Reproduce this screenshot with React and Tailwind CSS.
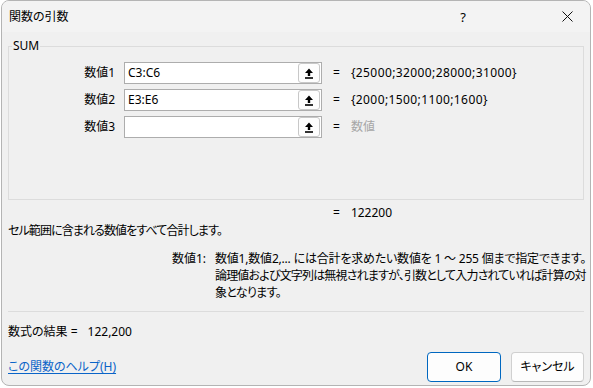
import React from "react";

const FONT = "[font-family:'Noto_Sans','Noto_Sans_CJK_JP',sans-serif] [font-feature-settings:'palt']";

const RefIcon = () => (
  <svg width="10" height="11" viewBox="0 0 10 11">
    <path d="M5 0.5 L9 5 L6.2 5 L6.2 8 L3.8 8 L3.8 5 L1 5 Z" fill="#000" />
    <rect x="1" y="9.2" width="8" height="1.6" fill="#000" />
  </svg>
);

const args = [
  { label: "数値1", ref: "C3:C6", value: "{25000;32000;28000;31000}" },
  { label: "数値2", ref: "E3:E6", value: "{2000;1500;1100;1600}" },
  { label: "数値3", ref: "", value: null },
];

const ArgRow = ({ label, refText, value }) => (
  <div className="flex items-center h-[22px]">
    <div className="w-[106px] text-right text-black">{label}</div>
    <div className="ml-[9px] w-[198px] h-[22px] flex items-center bg-white border border-[#adadad]">
      <span className="flex-1 pl-[3px] text-black">{refText}</span>
      <button className="w-[22px] h-[20px] mr-px flex items-center justify-center bg-[#fdfdfd] border border-[#c8c8c8] rounded-[3px]">
        <RefIcon />
      </button>
    </div>
    <span className="ml-[11px] text-black">=</span>
    {value ? (
      <span className="ml-[11px] text-black tracking-[0.4px]">{value}</span>
    ) : (
      <span className="ml-[11px] text-[#a6a6a6]">数値</span>
    )}
  </div>
);

export default function App() {
  return (
    <div className={`w-[593px] h-[388px] bg-white ${FONT} text-[12px] leading-[16px]`}>
      <div className="ml-px w-[590px] h-[386px] flex flex-col border border-[#b4b4b4] rounded-[8px] overflow-hidden bg-[#f0f0f0]">
        <div className="h-[31px] shrink-0 flex items-center bg-[#f3f3f3]">
          <span className="pl-[7px] text-black">関数の引数</span>
          <div className="ml-auto flex items-center gap-[58px]">
            <span className="w-[46px] text-center text-[13px] text-black">?</span>
            <span className="w-[46px] flex justify-center">
              <svg width="11" height="11" viewBox="0 0 11 11">
                <path d="M0.5 0.5 L10.5 10.5 M10.5 0.5 L0.5 10.5" stroke="#111" strokeWidth="1" />
              </svg>
            </span>
          </div>
        </div>

        <div className="flex-1 flex flex-col pl-[6px] pr-[6px]">
          <fieldset className="mt-[6px] h-[162px] border border-[#dcdcdc] px-0">
            <legend className="ml-[3px] px-[1px] text-black">SUM</legend>
            <div className="pt-[8px] flex flex-col gap-[5px]">
              {args.map((a) => (
                <ArgRow key={a.label} label={a.label} refText={a.ref} value={a.value} />
              ))}
            </div>
          </fieldset>

          <div className="mt-[5px] pl-[325px] flex text-black">
            <span>=</span>
            <span className="ml-[11px]">122200</span>
          </div>

          <div className="mt-[2px] text-black tracking-[-0.9px]">セル範囲に含まれる数値をすべて合計します。</div>

          <div className="mt-[11px] flex pl-[164px] leading-[17px] text-black">
            <span className="w-[43px] shrink-0">数値1:</span>
            <div className="flex flex-col whitespace-nowrap">
              <span className="tracking-[-0.2px]">
                数値1,数値2,... には合計を求めたい数値を 1 ～ 255 個まで指定できます。
              </span>
              <span className="tracking-[-0.82px]">
                論理値および文字列は無視されますが、引数として入力されていれば計算の対
              </span>
              <span className="tracking-[-0.7px]">象となります。</span>
            </div>
          </div>

          <div className="mt-[10px] border-t border-[#dcdcdc]" />

          <div className="mt-[12px] flex text-black">
            <span>数式の結果 =</span>
            <span className="ml-[10px]">122,200</span>
          </div>

          <div className="mt-[12px] flex items-center">
            <a className="text-[#0a64c8] underline underline-offset-2">この関数のヘルプ(H)</a>
            <div className="ml-auto flex gap-[10px]">
              <button className="w-[74px] h-[30px] bg-[#fdfdfd] border border-[#0067c0] rounded-[4px] text-black">
                OK
              </button>
              <button className="w-[73px] h-[30px] bg-[#fdfdfd] border border-[#d0d0d0] border-b-[#b8b8b8] rounded-[4px] text-black">
                キャンセル
              </button>
            </div>
          </div>
        </div>
      </div>
    </div>
  );
}
